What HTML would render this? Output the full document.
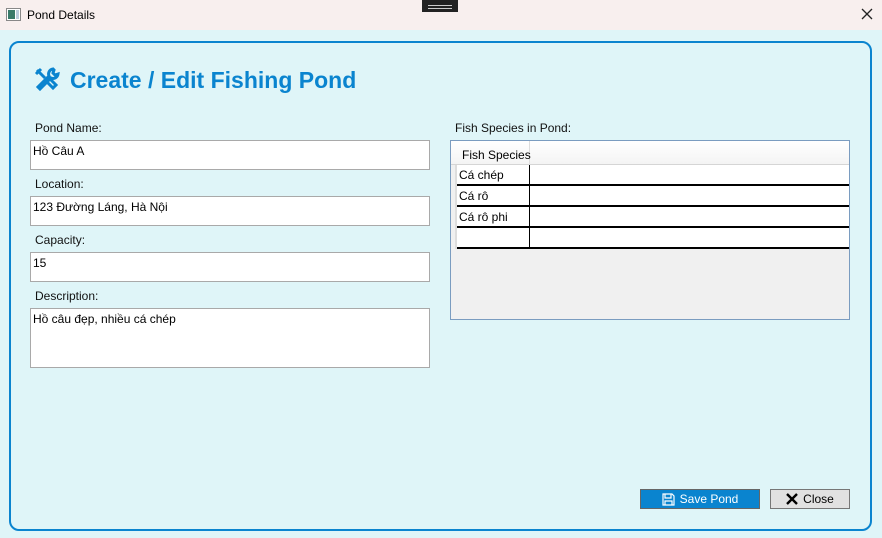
<!DOCTYPE html>
<html><head><meta charset="utf-8"><style>
*{margin:0;padding:0;box-sizing:border-box}
body{width:882px;height:538px;overflow:hidden;background:#dff5f8;font-family:"Liberation Sans","Noto Sans CJK SC",sans-serif;font-size:12px;color:#000;position:relative}
.abs{position:absolute}
.tb{left:0;top:0;width:882px;height:30px;background:#f8efee}
.panel{left:9px;top:41px;width:863px;height:490px;border:2px solid #0a84cf;border-radius:10px}
.lbl{font-size:12px;color:#111}
.inp{background:#fff;border:1px solid #a9a9a9;padding:3px 2px;font-size:12px}
h1{position:absolute;left:70px;top:67px;font-size:23px;font-weight:bold;color:#0a84cf;white-space:nowrap}
.grid{left:450px;top:140px;width:400px;height:180px;border:1px solid #7a9cc0;background:#f0f0f0}
.row{position:absolute;left:6px;width:392px;height:21px;background:#fff;border-bottom:2px solid #000}
.row span{position:absolute;left:2px;top:3px;white-space:nowrap}
.row i{position:absolute;left:72px;top:0;bottom:-2px;border-left:1.5px solid #000}
.btn{height:20px;border:1px solid #777;font-size:12px;display:flex;align-items:center;justify-content:center;gap:5px}
</style></head><body>
<div class="abs tb"></div>
<svg class="abs" style="left:6px;top:8px" width="16" height="14" viewBox="0 0 16 14"><rect x="0.5" y="0.5" width="14" height="12" fill="#fff" stroke="#888"/><rect x="2" y="2" width="7" height="9" fill="#3a7a6a"/><rect x="10" y="2" width="3" height="9" fill="#bcd"/></svg>
<div class="abs" style="left:27px;top:8px;font-size:12px">Pond Details</div>
<div class="abs" style="left:422px;top:0;width:36px;height:12px;background:#222"><div style="margin:5px 6px 0;height:1px;background:#ccc"></div><div style="margin:2px 6px 0;height:1px;background:#ccc"></div></div>
<svg class="abs" style="left:861px;top:8px" width="12" height="12"><path d="M1 1L11 11M11 1L1 11" stroke="#222" stroke-width="1.3"/></svg>
<div class="abs panel"></div>
<svg class="abs" style="left:33px;top:66px" width="28" height="26" viewBox="0 0 28 26"><g fill="none" stroke="#0a84cf" stroke-width="3"><path d="M4 4l8 8M3 8l5-5"/><path d="M12 14l8 8 3-3-8-8"/><path d="M20 3a5 5 0 0 0-4 7L5 21l2 2 11-11a5 5 0 0 0 7-4l-3 1-2-2 1-3z"/></g></svg>
<h1>Create / Edit Fishing Pond</h1>
<div class="abs lbl" style="left:35px;top:121px">Pond Name:</div>
<div class="abs inp" style="left:30px;top:140px;width:400px;height:30px">Hồ Câu A</div>
<div class="abs lbl" style="left:35px;top:177px">Location:</div>
<div class="abs inp" style="left:30px;top:196px;width:400px;height:30px">123 Đường Láng, Hà Nội</div>
<div class="abs lbl" style="left:35px;top:233px">Capacity:</div>
<div class="abs inp" style="left:30px;top:252px;width:400px;height:30px">15</div>
<div class="abs lbl" style="left:35px;top:289px">Description:</div>
<div class="abs inp" style="left:30px;top:308px;width:400px;height:60px">Hồ câu đẹp, nhiều cá chép</div>
<div class="abs lbl" style="left:455px;top:121px">Fish Species in Pond:</div>
<div class="abs grid">
 <div class="abs" style="left:0;top:0;width:398px;height:24px;background:linear-gradient(#fff,#f4f4f4);border-bottom:1px solid #d5d5d5"></div>
 <div class="abs" style="left:6px;top:0;width:73px;height:24px;border-right:1px solid #ddd;padding:7px 0 0 5px;white-space:nowrap">Fish Species</div>
 <div class="abs" style="left:4px;top:24px;width:2px;height:84px;background:#ddd"></div>
 <div class="row" style="top:24px"><span>Cá chép</span><i></i></div>
 <div class="row" style="top:45px"><span>Cá rô</span><i></i></div>
 <div class="row" style="top:66px"><span>Cá rô phi</span><i></i></div>
 <div class="row" style="top:87px"><span></span><i></i></div>
</div>
<div class="abs btn" style="left:640px;top:489px;width:120px;background:#0a84cf;color:#fff;border-color:#666">
<svg width="13" height="13" viewBox="0 0 13 13"><path d="M1 1h9l2 2v9H1z M3 1v4h6V1 M3 12V8h7v4" fill="none" stroke="#fff" stroke-width="1.2"/></svg>Save Pond</div>
<div class="abs btn" style="left:770px;top:489px;width:80px;background:#e1e1e1">
<svg width="12" height="12"><path d="M1 1L11 11M11 1L1 11" stroke="#000" stroke-width="2.4"/></svg>Close</div>
</body></html>
